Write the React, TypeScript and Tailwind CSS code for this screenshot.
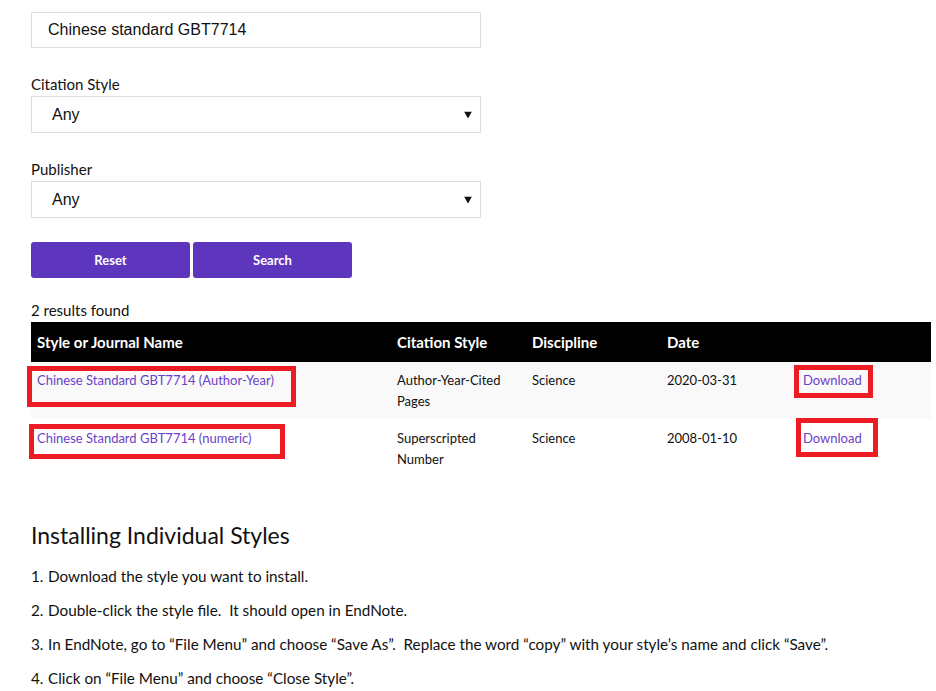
import React from "react";

const SS = { fontFamily: "Lato, 'Open Sans', sans-serif" };

function Arrow() {
  return (
    <svg width="8" height="7" viewBox="0 0 8 7" className="absolute right-[8px] top-1/2 -translate-y-1/2">
      <path d="M0 0 L8 0 L4 7 Z" fill="#111" />
    </svg>
  );
}

function Select() {
  return (
    <div className="relative w-[450px] h-[37px] border border-[#dddddd] bg-white flex items-center pl-[20px] text-[16px] text-[#111]" style={{ fontFamily: "'Liberation Sans', Arial, sans-serif" }}>
      Any
      <Arrow />
    </div>
  );
}

const rows = [
  { name: "Chinese Standard GBT7714 (Author-Year)", style: ["Author-Year-Cited", "Pages"], disc: "Science", date: "2020-03-31", bg: "bg-[#f9f9f9]", pt: "pt-[8px]", h: "h-[57px]" },
  { name: "Chinese Standard GBT7714 (numeric)", style: ["Superscripted", "Number"], disc: "Science", date: "2008-01-10", bg: "bg-white", pt: "pt-[9px]", h: "h-[58px]" },
];

export default function App() {
  return (
    <div className="w-[936px] h-[691px] bg-white overflow-hidden pl-[31px] pt-[12px] text-[#111]" style={SS}>
      <div className="w-[450px] h-[36px] border border-[#dddddd] flex items-center pl-[16px] text-[16px] text-[#111]" style={{ fontFamily: "'Liberation Sans', Arial, sans-serif" }}>
        Chinese standard GBT7714
      </div>

      <div className="mt-[25px] leading-[22px] text-[15px]">Citation Style</div>
      <div className="mt-[1px]"><Select /></div>

      <div className="mt-[25px] leading-[22px] text-[15px]">Publisher</div>
      <div className="mt-[1px]"><Select /></div>

      <div className="mt-[24px] flex gap-[3px]">
        <button className="w-[159px] h-[36px] pt-[2px] rounded-[3px] bg-[#5e35bd] text-white font-bold text-[13px]">Reset</button>
        <button className="w-[159px] h-[36px] pt-[2px] rounded-[3px] bg-[#5e35bd] text-white font-bold text-[13px]">Search</button>
      </div>

      <div className="mt-[22px] leading-[20px] text-[15px]">2 results found</div>

      <div className="relative mt-[2px] w-[900px]">
        <table className="w-[900px] border-collapse table-fixed">
          <colgroup>
            <col className="w-[360px]" />
            <col className="w-[135px]" />
            <col className="w-[135px]" />
            <col className="w-[136px]" />
            <col className="w-[134px]" />
          </colgroup>
          <thead>
            <tr className="bg-black text-white h-[40px]">
              <th className="text-left pl-[6px] font-bold text-[15px]">Style or Journal Name</th>
              <th className="text-left pl-[6px] font-bold text-[15px]">Citation Style</th>
              <th className="text-left pl-[6px] font-bold text-[15px]">Discipline</th>
              <th className="text-left pl-[6px] font-bold text-[15px]">Date</th>
              <th></th>
            </tr>
          </thead>
          <tbody>
            {rows.map((r, i) => (
              <tr key={i} className={`${r.bg} ${r.h} align-top`}>
                <td className={`pl-[6px] ${r.pt} text-[13px] leading-[21px] text-[#6a3fc9]`}>{r.name}</td>
                <td className={`pl-[6px] ${r.pt} text-[13px] leading-[21px]`}>{r.style[0]}<br />{r.style[1]}</td>
                <td className={`pl-[6px] ${r.pt} text-[13px] leading-[21px]`}>{r.disc}</td>
                <td className={`pl-[6px] ${r.pt} text-[13px] leading-[21px]`}>{r.date}</td>
                <td className={`pl-[6px] ${r.pt} text-[13px] leading-[21px] text-[#6a3fc9]`}>Download</td>
              </tr>
            ))}
          </tbody>
        </table>
        <div className="absolute left-[-4px] top-[44px] w-[269px] h-[41px] border-[5px] border-[#ed1c24]" />
        <div className="absolute left-[-2px] top-[102px] w-[256px] h-[35px] border-[5px] border-[#ed1c24]" />
        <div className="absolute left-[763px] top-[43px] w-[79px] h-[33px] border-[5px] border-[#ed1c24]" />
        <div className="absolute left-[765px] top-[96px] w-[82px] h-[39px] border-[5px] border-[#ed1c24]" />
      </div>

      <h2 className="mt-[43px] text-[23px] leading-[30px] font-normal text-[#111]">Installing Individual Styles</h2>

      <div className="mt-[16px] flex flex-col gap-[14px] text-[15.25px] leading-[20px]">
        {[
          "Download the style you want to install.",
          "Double-click the style file.\u00a0 It should open in EndNote.",
          "In EndNote, go to \u201cFile Menu\u201d and choose \u201cSave As\u201d.\u00a0 Replace the word \u201ccopy\u201d with your style\u2019s name and click \u201cSave\u201d.",
          "Click on \u201cFile Menu\u201d and choose \u201cClose Style\u201d.",
        ].map((t, i) => (
          <div key={i} className="flex">
            <span className="w-[17px]">{i + 1}.</span>
            <span>{t}</span>
          </div>
        ))}
      </div>
    </div>
  );
}
